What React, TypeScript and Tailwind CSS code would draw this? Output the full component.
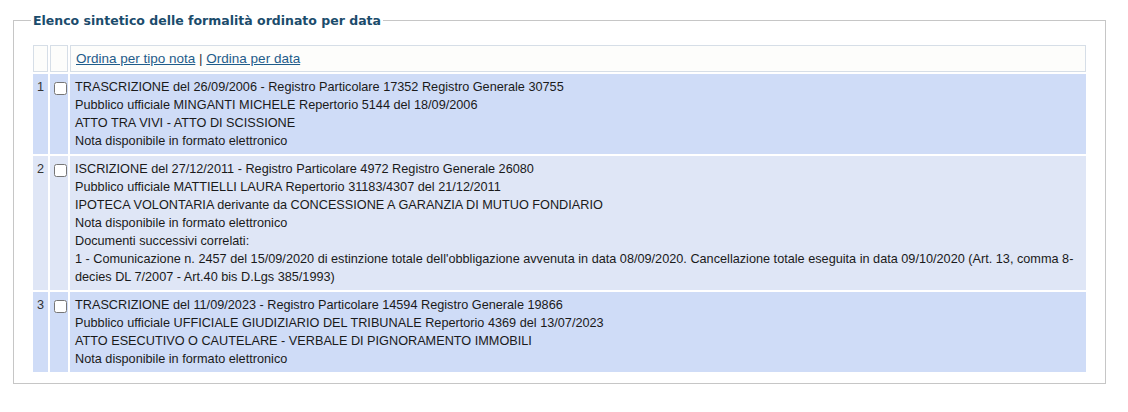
const rows = [
  {
    n: 1,
    bg: "bg-[#cfdcf7]",
    lines: [
      "TRASCRIZIONE del 26/09/2006 - Registro Particolare 17352 Registro Generale 30755",
      "Pubblico ufficiale MINGANTI MICHELE Repertorio 5144 del 18/09/2006",
      "ATTO TRA VIVI - ATTO DI SCISSIONE",
      "Nota disponibile in formato elettronico",
    ],
  },
  {
    n: 2,
    bg: "bg-[#dfe6f6]",
    lines: [
      "ISCRIZIONE del 27/12/2011 - Registro Particolare 4972 Registro Generale 26080",
      "Pubblico ufficiale MATTIELLI LAURA Repertorio 31183/4307 del 21/12/2011",
      "IPOTECA VOLONTARIA derivante da CONCESSIONE A GARANZIA DI MUTUO FONDIARIO",
      "Nota disponibile in formato elettronico",
      "Documenti successivi correlati:",
      "1 - Comunicazione n. 2457 del 15/09/2020 di estinzione totale dell'obbligazione avvenuta in data 08/09/2020. Cancellazione totale eseguita in data 09/10/2020 (Art. 13, comma 8-decies DL 7/2007 - Art.40 bis D.Lgs 385/1993)",
    ],
  },
  {
    n: 3,
    bg: "bg-[#cfdcf7]",
    lines: [
      "TRASCRIZIONE del 11/09/2023 - Registro Particolare 14594 Registro Generale 19866",
      "Pubblico ufficiale UFFICIALE GIUDIZIARIO DEL TRIBUNALE Repertorio 4369 del 13/07/2023",
      "ATTO ESECUTIVO O CAUTELARE - VERBALE DI PIGNORAMENTO IMMOBILI",
      "Nota disponibile in formato elettronico",
    ],
  },
];

export default function App() {
  return (
    <div className="bg-white w-[1128px] h-[412px] pt-[12px] font-['Liberation_Sans',Arial,sans-serif] text-[#1a1a1a]">
      <fieldset className="ml-[13px] w-[1093px] border border-[#c6c6c6] pt-[15px] px-[17px] pb-[9px]">
        <legend className="px-[2px] h-[16px] leading-[17px] text-[12.5px] font-bold text-[#1b4c6c] font-['DejaVu_Sans',Verdana,sans-serif]">
          Elenco sintetico delle formalità ordinato per data
        </legend>

        <table className="w-full border-separate border-spacing-[2px] text-[12.7px] leading-[18px]">
          <thead>
            <tr>
              <th className="w-[15px] h-[27px] border border-[#d6dee7] bg-[#fdfdfb]" />
              <th className="w-[18px] h-[27px] border border-[#d6dee7] bg-[#fdfdfb]" />
              <th className="h-[27px] border border-[#d6dee7] bg-[#fdfdfb] text-left font-normal pl-[5px] text-[13.5px]">
                <a href="#" className="underline text-[#1f5c8a]">Ordina per tipo nota</a>
                <span className="text-[#333]"> | </span>
                <a href="#" className="underline text-[#1f5c8a]">Ordina per data</a>
              </th>
            </tr>
          </thead>
          <tbody>
            {rows.map((r) => (
              <tr key={r.n}>
                <td className={`${r.bg} align-top pl-[4px] pt-[4px] text-[#333]`}>{r.n}</td>
                <td className={`${r.bg} align-top pl-[4px] pr-[1px] pt-[8px]`}>
                  <input type="checkbox" className="block m-0 w-[13px] h-[13px]" />
                </td>
                <td className={`${r.bg} align-top pl-[5px] pr-[8px] pt-[4px] pb-[4px]`}>
                  {r.lines.map((l, i) => (
                    <div key={i}>{l}</div>
                  ))}
                </td>
              </tr>
            ))}
          </tbody>
        </table>
      </fieldset>
    </div>
  );
}
